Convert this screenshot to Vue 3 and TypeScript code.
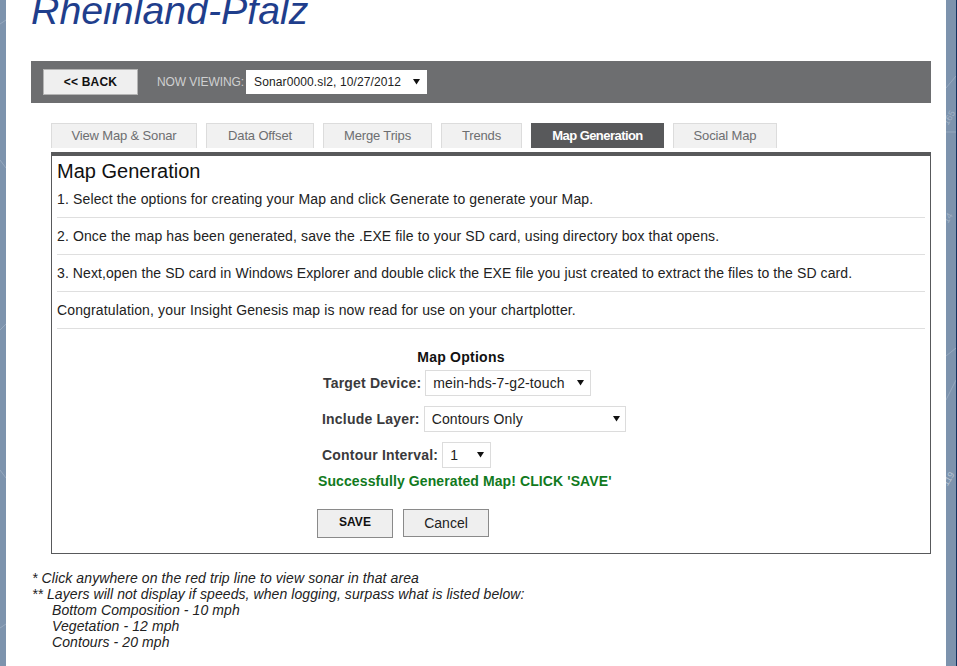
<script setup lang="ts">
const tabs = ['View Map & Sonar', 'Data Offset', 'Merge Trips', 'Trends', 'Map Generation', 'Social Map']
const activeTab = 'Map Generation'

const steps = [
  '1. Select the options for creating your Map and click Generate to generate your Map.',
  '2. Once the map has been generated, save the .EXE file to your SD card, using directory box that opens.',
  '3. Next,open the SD card in Windows Explorer and double click the EXE file you just created to extract the files to the SD card.',
  'Congratulation, your Insight Genesis map is now read for use on your chartplotter.',
]

const speeds = ['Bottom Composition - 10 mph', 'Vegetation - 12 mph', 'Contours - 20 mph']
</script>

<template>
  <div class="shell">
    <div class="strip strip-left">
      <svg width="6" height="666" viewBox="0 0 6 666" fill="none" stroke="#a9b8ca" stroke-width="1" opacity="0.6">
        <path d="M0 24 6 20M0 160 6 168M0 330 6 324M0 470 6 478M0 628 6 624" />
      </svg>
    </div>

    <main class="page">
      <h1 class="title">Rheinland-Pfalz</h1>

      <div class="bar">
        <button class="back" type="button">&lt;&lt; BACK</button>
        <span class="viewing">NOW VIEWING:</span>
        <div class="pick pick-trip">
          <select>
            <option>Sonar0000.sl2, 10/27/2012</option>
          </select>
          <svg class="arrow" width="7" height="7" viewBox="0 0 7 7"><path d="M0 1h7L3.500 6.500z" /></svg>
        </div>
      </div>

      <nav class="tabs">
        <a v-for="tab in tabs" :key="tab" class="tab" :class="{ active: tab === activeTab }">{{ tab }}</a>
      </nav>

      <section class="panel">
        <h2 class="heading">Map Generation</h2>
        <p v-for="step in steps" :key="step" class="step">{{ step }}</p>

        <div class="options">
          <h3 class="options-title">Map Options</h3>

          <div class="row row-device">
            <label>Target Device:</label>
            <div class="pick pick-device">
              <select><option>mein-hds-7-g2-touch</option></select>
              <svg class="arrow" width="7" height="7" viewBox="0 0 7 7"><path d="M0 1h7L3.500 6.500z" /></svg>
            </div>
          </div>

          <div class="row row-layer">
            <label>Include Layer:</label>
            <div class="pick pick-layer">
              <select><option>Contours Only</option></select>
              <svg class="arrow" width="7" height="7" viewBox="0 0 7 7"><path d="M0 1h7L3.500 6.500z" /></svg>
            </div>
          </div>

          <div class="row row-interval">
            <label>Contour Interval:</label>
            <div class="pick pick-interval">
              <select><option>1</option></select>
              <svg class="arrow" width="7" height="7" viewBox="0 0 7 7"><path d="M0 1h7L3.500 6.500z" /></svg>
            </div>
          </div>

          <div class="success">Successfully Generated Map! CLICK 'SAVE'</div>

          <div class="actions">
            <button class="btn btn-save" type="button">SAVE</button>
            <button class="btn btn-cancel" type="button">Cancel</button>
          </div>
        </div>
      </section>

      <div class="notes">
        <div>* Click anywhere on the red trip line to view sonar in that area</div>
        <div class="note-long">** Layers will not display if speeds, when logging, surpass what is listed below:</div>
        <div v-for="speed in speeds" :key="speed" class="indent">{{ speed }}</div>
      </div>
    </main>

    <div class="strip strip-right">
      <svg width="10" height="666" viewBox="0 0 10 666" fill="none" stroke="#a9b8ca" stroke-width="1" opacity="0.6">
        <path d="M0 88 10 76M0 400 10 380M0 356 10 348M0 132 10 132" />
        <text x="1" y="124" font-size="9" font-family="Liberation Sans, sans-serif" fill="#b9c5d4" stroke="none" transform="rotate(-60 3 124)">165</text>
        <text x="1" y="222" font-size="9" font-family="Liberation Sans, sans-serif" fill="#b9c5d4" stroke="none" transform="rotate(-60 3 222)">14</text>
        <text x="0" y="484" font-size="9" font-family="Liberation Sans, sans-serif" fill="#dfe5ec" stroke="none" transform="rotate(-60 3 484)">119</text>
      </svg>
    </div>
    <div class="edge"></div>
  </div>
</template>

<style>
html, body { margin: 0; padding: 0; background: #7d93ad; }
</style>

<style scoped>
.shell {
  display: flex;
  height: 666px;
  width: 957px;
  overflow: hidden;
  font-family: "Liberation Sans", Arial, sans-serif;
  color: #222;
}
.strip { background: #7d93ad; flex-shrink: 0; }
.strip svg { display: block; }
.strip-left { width: 6px; }
.strip-right { width: 10px; }
.edge { width: 1px; background: #12305e; flex-shrink: 0; }

.page {
  width: 940px;
  flex-shrink: 0;
  background: #fff;
  padding: 0 15px 0 25px;
  box-sizing: border-box;
}

.title {
  margin: -13px 0 0;
  height: 74px;
  line-height: 46px;
  font-size: 39.3px;
  font-weight: 400;
  font-style: italic;
  color: #1f3e8c;
}

.bar {
  display: flex;
  align-items: center;
  height: 42px;
  background: #6d6e70;
  padding-left: 12px;
}
.back {
  width: 95px;
  height: 26px;
  padding: 0;
  background: #efefef;
  border: 1px solid #b4b4b4;
  border-radius: 0;
  font: 700 12px "Liberation Sans", Arial, sans-serif;
  letter-spacing: 0.2px;
  color: #111;
}
.viewing {
  margin-left: 19px;
  margin-right: 2px;
  font-size: 12px;
  letter-spacing: -0.08px;
  color: #cfd0d1;
}

.pick { position: relative; box-sizing: border-box; background: #fff; flex-shrink: 0; }
.pick select {
  appearance: none;
  display: block;
  width: 100%;
  height: 100%;
  margin: 0;
  border: 1px solid #dcdcdc;
  border-radius: 0;
  background: transparent;
  font-family: "Liberation Sans", Arial, sans-serif;
  color: #222;
  box-sizing: border-box;
  outline: none;
}
.arrow { position: absolute; top: 50%; margin-top: -4px; fill: #111; pointer-events: none; }

.pick-trip { width: 181px; height: 24px; }
.pick-trip select { font-size: 12px; padding: 0 0 0 8px; border: 0; letter-spacing: 0.12px; }
.pick-trip .arrow { right: 7px; }

.tabs {
  display: flex;
  gap: 9px;
  margin: 20px 0 4px 20px;
}
.tab {
  box-sizing: border-box;
  height: 25px;
  line-height: 24px;
  font-size: 13px;
  letter-spacing: -0.15px;
  text-align: center;
  white-space: nowrap;
  color: #6d6e70;
  background: #f1f1f1;
  border: 1px solid #dcdcdc;
  border-bottom: 0;
}
.tab:nth-child(1) { width: 146px; }
.tab:nth-child(2) { width: 108px; }
.tab:nth-child(3) { width: 109px; }
.tab:nth-child(4) { width: 81px; }
.tab:nth-child(5) { width: 133px; }
.tab:nth-child(6) { width: 104px; }
.tab.active {
  background: #58595b;
  border-color: #58595b;
  color: #fff;
  font-weight: 700;
  letter-spacing: -0.55px;
}

.panel {
  box-sizing: border-box;
  margin-left: 20px;
  width: 880px;
  height: 402px;
  border: 1px solid #58595b;
  border-top-width: 4px;
  padding: 0 5px;
}
.heading {
  margin: 0;
  height: 30px;
  line-height: 30px;
  font-size: 20px;
  font-weight: 400;
  color: #111;
}
.step {
  margin: 0;
  height: 37px;
  line-height: 37px;
  box-sizing: border-box;
  font-size: 14px;
  letter-spacing: 0.14px;
  color: #222;
  border-bottom: 1px solid #dfdfdf;
}
.step:nth-of-type(1) { height: 32px; line-height: 27px; }
.step:nth-of-type(2) { letter-spacing: 0.12px; }
.step:nth-of-type(3) { letter-spacing: 0.09px; }

.options {
  width: 288px;
  margin-left: 260px;
  padding-top: 19px;
  white-space: nowrap;
}
.options-title {
  margin: 0 0 4px;
  height: 18px;
  line-height: 18px;
  font-size: 14px;
  font-weight: 700;
  letter-spacing: 0.25px;
  text-align: center;
  color: #111;
}
.row {
  display: flex;
  align-items: center;
  height: 26px;
  margin-bottom: 10px;
  padding-left: 5px;
}
.row label {
  font-size: 14px;
  font-weight: 700;
  color: #3a3a3c;
  letter-spacing: 0.2px;
}
.row .pick { margin-left: 4px; }
.row select { font-size: 14px; padding: 0 0 0 7px; letter-spacing: 0.12px; }
.row-device { padding-left: 6px; }
.pick-device { width: 166px; height: 26px; }
.pick-device .arrow { right: 7px; }
.pick-layer { width: 202px; height: 26px; }
.pick-layer .arrow { right: 6px; }
.pick-interval { width: 49px; height: 26px; }
.pick-interval .arrow { right: 7px; }

.success {
  margin-top: -6px;
  padding-left: 1px;
  height: 18px;
  line-height: 18px;
  font-size: 14px;
  font-weight: 700;
  letter-spacing: 0.1px;
  color: #117a1d;
}
.actions {
  display: flex;
  align-items: flex-start;
  gap: 10px;
  margin-top: 19px;
}
.btn {
  padding: 0;
  background: #efefef;
  border: 1px solid #8a8a8a;
  border-radius: 0;
  font-family: "Liberation Sans", Arial, sans-serif;
  color: #222;
}
.btn-save { width: 76px; height: 29px; font-size: 12px; font-weight: 700; padding-bottom: 3px; color: #111; }
.btn-cancel { width: 86px; height: 28px; font-size: 14px; }

.notes {
  margin: 16px 0 0 1px;
  font-size: 14px;
  line-height: 16px;
  font-style: italic;
  letter-spacing: 0.1px;
  color: #222;
}
.note-long { letter-spacing: 0.075px; }
.indent { padding-left: 20px; }
</style>
